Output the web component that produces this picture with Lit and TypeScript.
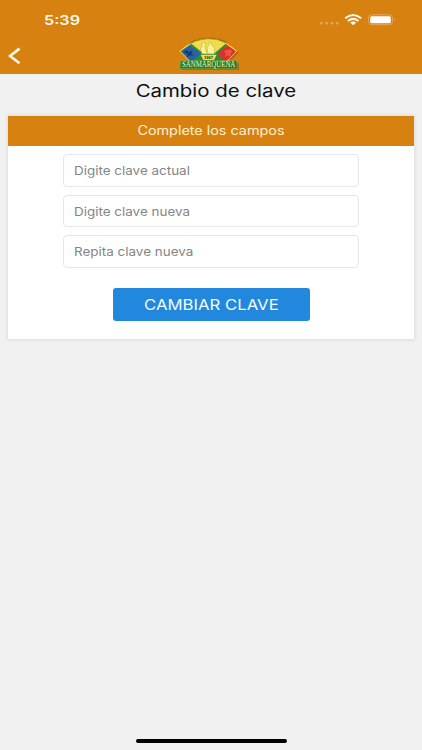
import { LitElement, html, css } from 'lit'

/**
 * Brand logo: fan over a green name banner
 */
export class BrandLogo extends LitElement {
  static styles = css`
    :host {
      display: block;
      width: 76px;
      height: 44px;
    }

    svg {
      display: block;
    }

    .name {
      font: 400 23px 'Liberation Serif', serif;
      fill: #faf5b4;
    }

    .motto {
      font: 700 8px 'Liberation Sans', sans-serif;
      fill: #77681c;
    }

    .year {
      font: 700 11px 'Liberation Sans', sans-serif;
      fill: #1d1a10;
    }
  `;

  render() {
    return html`
      <svg width="76" height="44" viewBox="0 0 228 132">
        <path d="M28 62Q110 -16 200 61L170 92H201V114H30V92H60Z" fill="#8a4606" opacity=".5" />
        <path d="M22 57Q110 -18 196 57L165 89H54Z" fill="#f0dc4a" />
        <path d="M26 58L54 38L89 66L62 88H55Z" fill="#2a62a0" />
        <path d="M192 58L165 38L132 66L157 88H164Z" fill="#df3028" />
        <path d="M54 38L58 35L96 66H125L161 35L165 38L136 66L160 88H60L86 66Z" fill="#2c8a3c" />
        <path d="M35 60L43 54L51 60L61 56L58 65L66 71L54 70L46 76L46 66Z" fill="#153c70" />
        <path d="M156 57L166 54L176 52L182 60L175 65L177 74L167 70L158 75L162 65Z" fill="#e8564a" />
        <g fill="#fbf3a0" stroke="#b9a73a" stroke-width="1.5">
          <path d="M90 65L86 49L92 42L89 34L95 31L101 38L98 46L105 65Z" />
          <path d="M108 65L105 48L111 40L108 33L115 31L119 40L128 48L127 65Z" />
        </g>
        <path id="arc" d="M54 36Q110 8 166 36" fill="none" />
        <text class="motto"><textPath href="#arc" textLength="112">ASOCIACION DE PADRES Y AMIGOS</textPath></text>
        <path d="M86 68H134L126 84H94Z" fill="#efe04c" />
        <text class="year" x="96" y="80" textLength="27" lengthAdjust="spacingAndGlyphs">1967</text>
        <path d="M26 86H194L197 110H23Z" fill="#1d7f38" stroke="#a9ae45" stroke-width="1.5" />
        <text class="name" x="30" y="106" textLength="160" lengthAdjust="spacingAndGlyphs">SANMARQUEÑA</text>
      </svg>
    `
  }
}

customElements.define('brand-logo', BrandLogo)

/**
 * Status bar with the clock, signal, wifi and battery
 */
export class StatusBar extends LitElement {
  static styles = css`
    :host {
      display: flex;
      justify-content: space-between;
      align-items: center;
      height: 40px;
      padding: 0 27px 0 44px;
      box-sizing: border-box;
      color: #fff9e8;
    }

    .time {
      font: 600 13.5px/20px Inter, sans-serif;
      transform: scaleX(1.2);
      transform-origin: left;
    }

    svg {
      display: block;
    }
  `;

  render() {
    return html`
      <span class="time">5:39</span>
      <svg width="76" height="16" viewBox="0 0 76 16">
        <g fill="#e6a552">
          <rect x="1" y="10" width="3" height="2.4" rx="1" />
          <rect x="6.3" y="10" width="3" height="2.4" rx="1" />
          <rect x="11.6" y="10" width="3" height="2.4" rx="1" />
          <rect x="16.9" y="10" width="3" height="2.4" rx="1" />
        </g>
        <g fill="none" stroke="#fff9e8" stroke-width="2">
          <path d="M26.2 6.3Q34.2 -0.4 42.2 6.3" />
          <path d="M29 9Q34.2 4.8 39.4 9" />
        </g>
        <path d="M31.3 10.5Q34.2 8.5 37.1 10.5L34.2 13.2Z" fill="#fff9e8" />
        <rect x="49.5" y="2.8" width="24" height="9.8" rx="3" fill="none" stroke="#e6a552" />
        <rect x="51.2" y="4.2" width="20.6" height="7" rx="1.5" fill="#fff" />
        <path d="M75 5.8Q76.5 7.6 75 9.4Z" fill="#e6a552" />
      </svg>
    `
  }
}

customElements.define('status-bar', StatusBar)

/**
 * Change password screen
 */
export class AppRoot extends LitElement {
  static styles = css`
    :host {
      display: flex;
      flex-direction: column;
      height: 750px;
      background: #f1f1f1;
      font-family: Inter, 'Open Sans', sans-serif;
    }

    header {
      height: 74px;
      background: #d78111;
    }

    .nav {
      display: grid;
      grid-template-columns: 172px 76px;
      height: 42px;
      margin-top: -8px;
    }

    .back {
      padding: 15px 0 0 8px;
    }

    .back svg {
      display: block;
    }

    h1 {
      margin: 0;
      height: 42px;
      padding-left: 9px;
      text-align: center;
      font-size: 17px;
      font-weight: 400;
      line-height: 34px;
      color: #101010;
    }

    .wide {
      display: inline-block;
      transform: scaleX(1.2);
    }

    .card {
      height: 223px;
      margin: 0 8px;
      background: #fff;
      box-shadow: 0 0 3px 1px #dcdce0;
    }

    .card-title {
      height: 30px;
      background: #d78111;
      color: #fff1cf;
      font-size: 12.5px;
      line-height: 30px;
      text-align: center;
    }

    .card-title .wide {
      transform: scaleX(1.15);
    }

    form {
      display: flex;
      flex-direction: column;
      align-items: center;
      gap: 8px;
      padding-top: 8px;
    }

    .field {
      box-sizing: border-box;
      width: 296px;
      height: 32.5px;
      padding-left: 10px;
      border: 1px solid #e6e6ec;
      border-radius: 4px;
      background: #fff;
      color: #858585;
      font-size: 12px;
      line-height: 31px;
    }

    .field .wide {
      transform-origin: left;
      transform: scaleX(1.12);
    }

    button {
      width: 197px;
      height: 33px;
      margin-top: 12px;
      padding: 0;
      border: 0;
      border-radius: 3px;
      background: #2288dd;
      color: #f2faff;
      font: 400 15px/33px Inter, sans-serif;
    }

    button .wide {
      transform: scaleX(1.115);
    }

    .home {
      width: 151px;
      height: 4px;
      margin: auto auto 7px 136px;
      border-radius: 2px;
      background: #000;
    }
  `;

  render() {
    const fields = ['Digite clave actual', 'Digite clave nueva', 'Repita clave nueva']
    return html`
      <header>
        <status-bar></status-bar>
        <div class="nav">
          <div class="back">
            <svg width="14" height="18" viewBox="0 0 14 18">
              <path d="M11.5 1.6L2 9L11.5 16.2" fill="none" stroke="#fff9ee" stroke-width="2.6" />
            </svg>
          </div>
          <brand-logo></brand-logo>
        </div>
      </header>
      <h1><span class="wide">Cambio de clave</span></h1>
      <section class="card">
        <div class="card-title"><span class="wide">Complete los campos</span></div>
        <form>
          ${fields.map((label) => html`<div class="field"><span class="wide">${label}</span></div>`)}
          <button type="button"><span class="wide">CAMBIAR CLAVE</span></button>
        </form>
      </section>
      <div class="home"></div>
    `
  }
}

customElements.define('app-root', AppRoot)
